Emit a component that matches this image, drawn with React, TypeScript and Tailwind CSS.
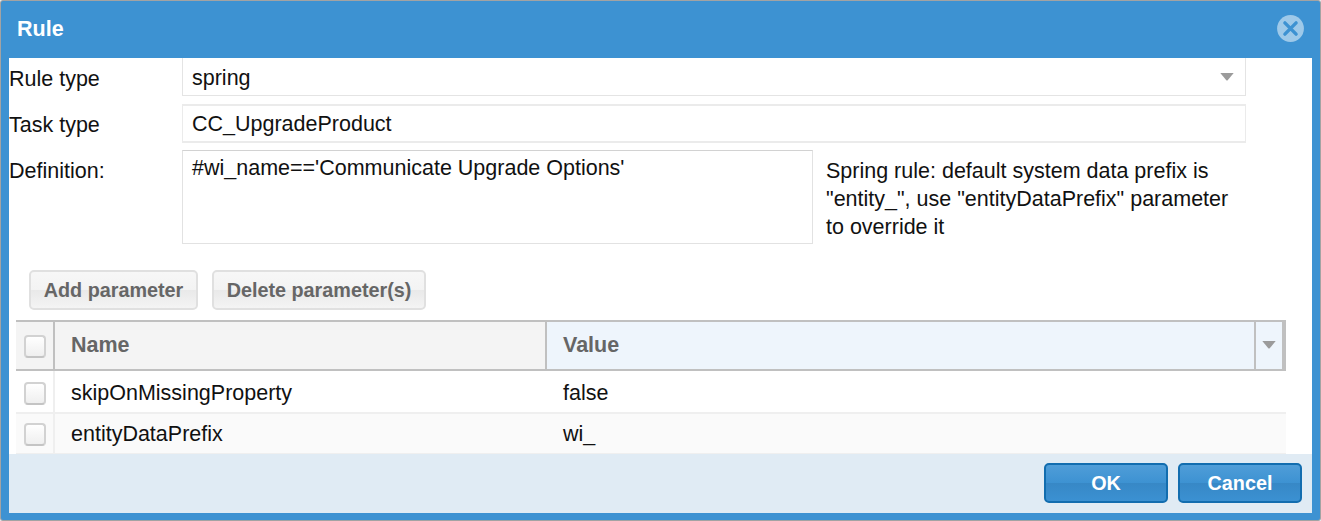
import React from "react";

function Checkbox() {
  return (
    <span
      role="checkbox"
      aria-checked="false"
      className="block h-[23px] w-[22px] rounded-[4px] border-2 border-[#d2d2d2] border-b-[#c4c4c4] bg-linear-to-b from-white to-[#efefef]"
    />
  );
}

function Caret() {
  return (
    <svg width="14" height="8" viewBox="0 0 14 8" className="block">
      <path d="M0.3 0H13.7L7.9 7Q7 8 6.1 7Z" fill="#9b9b9b" />
    </svg>
  );
}

function ToolButton({ className, children }: { className: string; children: React.ReactNode }) {
  return (
    <button
      className={
        "flex h-[40px] items-center justify-center whitespace-nowrap rounded-[5px] border-2 border-[#e0e0e0] bg-[linear-gradient(#f7f7f7,#f3f3f3_50%,#e9e9e9_51%,#f4f4f4)] pb-[1px] text-[19.8px] font-bold text-[#666] " +
        className
      }
    >
      {children}
    </button>
  );
}

function FooterButton({ className, children }: { className: string; children: React.ReactNode }) {
  return (
    <button
      className={
        "flex h-[40px] items-center justify-center rounded-[5px] border-2 border-[#126daf] bg-[linear-gradient(#4f9dd8,#3d92d2_50%,#3788c6_51%,#3b91d2)] pb-[1px] text-[19.8px] font-bold text-white " +
        className
      }
    >
      {children}
    </button>
  );
}

const rows = [
  { name: "skipOnMissingProperty", value: "false" },
  { name: "entityDataPrefix", value: "wi_" },
];

export default function App() {
  return (
    <div className="h-[521px] w-[1321px] overflow-hidden bg-[#e9e9e9] font-['Liberation_Sans',Arial,sans-serif] text-[21.5px] leading-[28px] text-[#111]">
      <div className="flex h-full flex-col rounded-[3px] border border-[#a3a3a3] bg-[#3d92d2] px-[8px] pb-[7px]">
        <header className="flex h-[57px] shrink-0 items-start justify-between pl-[8px] pr-[8px]">
          <h1 className="pt-[14px] font-bold text-white">Rule</h1>
          <svg width="27" height="27" viewBox="0 0 27 27" className="mt-[14px]">
            <circle cx="13.5" cy="13.5" r="13.4" fill="#9ec9e9" />
            <path d="M7.9 7.9L19.1 19.1M19.1 7.9L7.9 19.1" stroke="#3d92d2" strokeWidth="3.4" strokeLinecap="round" />
          </svg>
        </header>

        <main className="flex h-[396px] shrink-0 flex-col bg-white">
          <div className="flex h-[46px]">
            <label className="w-[173px] pt-[7px]">Rule type</label>
            <div className="flex h-[38px] w-[1064px] items-start justify-between border border-t-0 border-[#e4e4e4] pl-[9px] pr-[11px]">
              <span className="pt-[6px]">spring</span>
              <span className="pt-[15px]"><Caret /></span>
            </div>
          </div>
          <div className="flex h-[46px]">
            <label className="w-[173px] pt-[7px]">Task type</label>
            <div className="h-[39px] w-[1064px] border border-b-2 border-t-2 border-[#ebebeb] pl-[9px] pt-[4px]">
              CC_UpgradeProduct
            </div>
          </div>
          <div className="flex h-[120px]">
            <label className="w-[173px] pt-[7px]">Definition:</label>
            <div className="h-[94px] w-[631px] border border-[#e2e2e2] border-t-[#d2d2d2] pl-[9px] pt-[3px]">
              #wi_name=='Communicate Upgrade Options'
            </div>
            <p className="w-[430px] pl-[13px] pt-[7px]">
              Spring rule: default system data prefix is
              <br />
              "entity_", use "entityDataPrefix" parameter
              <br />
              to override it
            </p>
          </div>

          <div className="flex h-[50px] gap-[14px] pl-[20px]">
            <ToolButton className="w-[169px]">Add parameter</ToolButton>
            <ToolButton className="w-[214px]">Delete parameter(s)</ToolButton>
          </div>

          <div className="ml-[7px] w-[1270px]">
            <div className="flex h-[51px] border-y-2 border-[#c0c0c0] font-bold text-[#666]">
              <div className="flex w-[39px] items-start border-r-2 border-[#c0c0c0] bg-[#f4f4f4] pl-[8px] pt-[13px]">
                <Checkbox />
              </div>
              <div className="w-[492px] border-r-2 border-[#c0c0c0] bg-[#f4f4f4] pl-[16px] pt-[9px]">Name</div>
              <div className="w-[709px] border-r-2 border-[#c0c0c0] bg-[#eef5fc] pl-[16px] pt-[9px]">Value</div>
              <div className="flex w-[30px] items-start border-r-4 border-[#c0c0c0] bg-[#eef5fc] pl-[6px] pt-[19px]">
                <Caret />
              </div>
            </div>
            {rows.map((row, i) => (
              <div
                key={row.name}
                className={i === 0 ? "flex h-[43px] border-b-2 border-[#efefef] bg-white" : "flex h-[40px] border-b border-[#efefef] bg-[#fafafa]"}
              >
                <div className={i === 0 ? "w-[39px] border-r-2 border-[#efefef] pl-[8px] pt-[11px]" : "w-[39px] border-r-2 border-[#efefef] pl-[8px] pt-[9px]"}>
                  <Checkbox />
                </div>
                <div className={i === 0 ? "w-[492px] pl-[16px] pt-[8px]" : "w-[492px] pl-[16px] pt-[6px]"}>{row.name}</div>
                <div className={i === 0 ? "pl-[16px] pt-[8px]" : "pl-[16px] pt-[6px]"}>{row.value}</div>
              </div>
            ))}
          </div>
        </main>

        <footer className="flex grow items-start justify-end gap-[10px] bg-[#e0ebf4] pr-[10px] pt-[9px]">
          <FooterButton className="w-[124px]">OK</FooterButton>
          <FooterButton className="w-[124px]">Cancel</FooterButton>
        </footer>
      </div>
    </div>
  );
}
